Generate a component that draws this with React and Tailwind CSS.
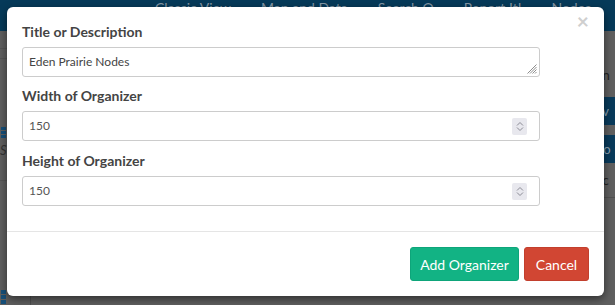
import React from "react";

function Spinner() {
  return (
    <div className="absolute right-[12px] top-[6px] w-[15px] h-[17px] bg-[#e8e8ee] rounded-[2px] flex flex-col items-center justify-center gap-[1px]">
      <svg width="8" height="5" viewBox="0 0 8 5" fill="none" stroke="#8a8a94" strokeWidth="1">
        <path d="M1 4.5 L4 1.5 L7 4.5" />
      </svg>
      <svg width="8" height="5" viewBox="0 0 8 5" fill="none" stroke="#8a8a94" strokeWidth="1">
        <path d="M1 0.5 L4 3.5 L7 0.5" />
      </svg>
    </div>
  );
}

function NumberField({ value }) {
  return (
    <div className="relative w-[518px] h-[30px] border border-[#cccccc] rounded-[3px] bg-white flex items-center pl-[6px] text-[12px] text-[#555]">
      {value}
      <Spinner />
    </div>
  );
}

function Label({ children }) {
  return <div className="text-[14px] leading-[20px] font-bold text-[#444] mb-[5px]">{children}</div>;
}

export default function App() {
  return (
    <div className="relative w-[615px] h-[305px] overflow-hidden bg-[#5f5f5f] font-['Lato',sans-serif]">
      {/* page behind the backdrop */}
      <div className="h-[31px] bg-[#063a59] flex items-start pl-[155px] gap-[30px] text-[14px] leading-[16px] text-[#8497a6] whitespace-nowrap">
        <span>Classic View</span>
        <span>Map and Data</span>
        <span>Search Q</span>
        <span>Report It!</span>
        <span>Nodes</span>
        <span>User</span>
      </div>
      <div className="flex h-[274px]">
        <div className="w-[31px] border-r border-[#4e4e4e] flex flex-col">
          <div className="h-[18px] border-b border-[#555]"></div>
          <div className="h-[10px] border-b border-[#555]"></div>
          <div className="mt-[68px] flex flex-col gap-[1px] pl-[1px]">
            <div className="w-[5px] h-[3px] bg-[#16507a]"></div>
            <div className="w-[5px] h-[3px] bg-[#16507a]"></div>
            <div className="w-[5px] h-[3px] bg-[#16507a]"></div>
          </div>
          <div className="text-[13px] leading-[16px] italic text-[#333] mt-[4px]">S</div>
          <div className="border-b border-[#555] mt-[22px]"></div>
          <div className="mt-auto flex flex-col gap-[1px] pl-[1px] mb-[1px]">
            <div className="w-[5px] h-[4px] bg-[#16507a]"></div>
            <div className="w-[5px] h-[4px] bg-[#16507a]"></div>
            <div className="w-[5px] h-[4px] bg-[#16507a]"></div>
          </div>
        </div>
        <div className="flex-1"></div>
        <div className="w-[20px] flex flex-col text-[13px]">
          <div className="h-[34px]"></div>
          <div className="h-[20px] leading-[20px] text-[#222] pl-[1px]">an</div>
          <div className="h-[12px]"></div>
          <div className="h-[28px] bg-[#083a5a] text-[#8aa0b0] pl-[1px] leading-[28px]">av</div>
          <div className="h-[10px]"></div>
          <div className="h-[28px] bg-[#083a5a] text-[#8aa0b0] pl-[1px] leading-[28px]">do</div>
          <div className="h-[35px] text-[#222] pl-[1px] leading-[35px] border-b border-[#505050]">ac</div>
        </div>
      </div>

      {/* modal */}
      <div className="absolute left-[7px] top-[7px] w-[597px] h-[289px] bg-white rounded-[6px] shadow-[0_3px_9px_rgba(0,0,0,0.5)] flex flex-col">
        <button className="absolute right-[15px] top-[0px] text-[21px] leading-[28px] font-bold text-[#cfcfcf]">×</button>
        <div className="px-[15px] pt-[15px] pb-[25px]">
          <Label>Title or Description</Label>
          <div className="relative w-[518px] h-[30px] border border-[#cccccc] rounded-[3px] flex items-center pl-[6px] text-[12px] text-[#444]">
            Eden Prairie Nodes
            <svg className="absolute right-[2px] bottom-[2px]" width="11" height="11" viewBox="0 0 11 11" stroke="#8d8d8d" strokeWidth="1">
              <path d="M10.5 1.5 L1.5 10.5 M10.5 4 L4 10.5 M10.5 6.5 L6.5 10.5 M10.5 9 L9 10.5" />
            </svg>
          </div>
          <div className="h-[9px]"></div>
          <Label>Width of Organizer</Label>
          <NumberField value="150" />
          <div className="h-[10px]"></div>
          <Label>Height of Organizer</Label>
          <NumberField value="150" />
        </div>
        <div className="border-t border-[#e5e5e5] p-[15px] flex justify-end gap-[5px]">
          <button className="w-[109px] h-[34px] rounded-[3px] bg-[#12b384] border border-[#0ea57a] text-white text-[14px]">
            Add Organizer
          </button>
          <button className="w-[65px] h-[34px] rounded-[3px] bg-[#d14633] border border-[#c23f2d] text-white text-[14px]">
            Cancel
          </button>
        </div>
      </div>
    </div>
  );
}
